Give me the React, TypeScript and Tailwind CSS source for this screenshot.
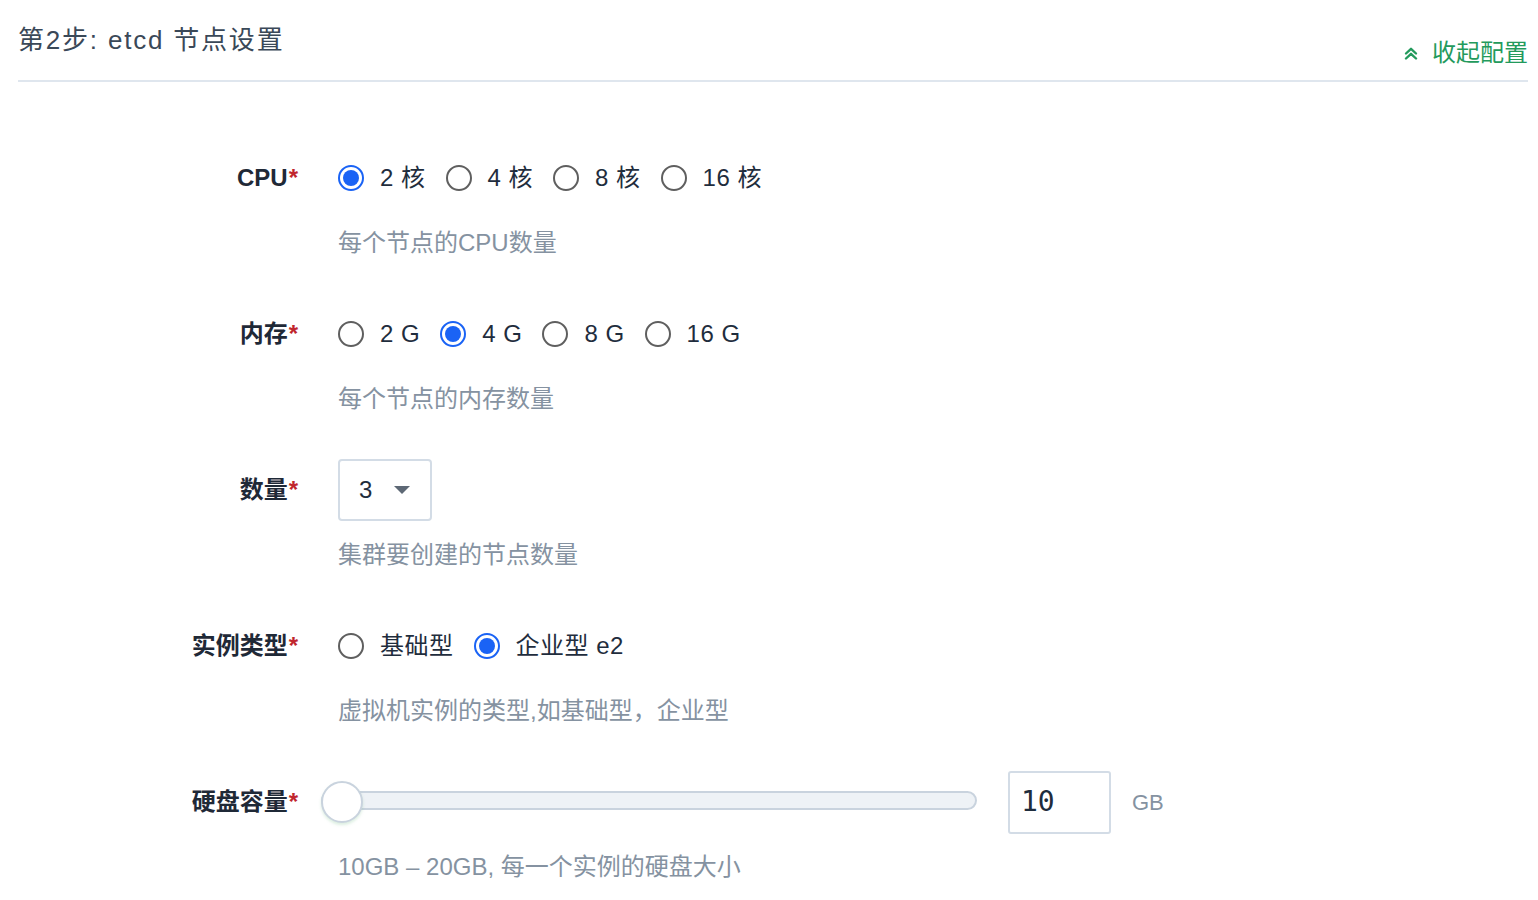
import React from "react";

const font = "font-['Liberation_Sans','Noto_Sans_CJK_SC',sans-serif]";

const Radio = ({checked, label}: {checked: boolean; label: string}) => {
    return (
        <label className="flex items-center mr-[20px] cursor-pointer">
            {checked ? (
                <span className="w-[26px] h-[26px] rounded-full border-2 border-[#1a63f5] flex items-center justify-center">
                    <span className="w-[16px] h-[16px] rounded-full bg-[#1a63f5]" />
                </span>
            ) : (
                <span className="w-[26px] h-[26px] rounded-full border-2 border-[#5f5f5f]" />
            )}
            <span className="ml-[16px] text-[24px] tracking-[0.5px] text-[#1f2d3d]">{label}</span>
        </label>
    );
};

const Field = ({label, hint, children}: {label: string; hint: string; children: React.ReactNode}) => {
    return (
        <div className="flex mb-[42px]">
            <div className="w-[280px] h-[62px] flex items-center justify-end text-[24px] font-semibold text-[#1f2937]">
                {label}
                <span className="text-[#c0262d] ml-[1px]">*</span>
            </div>
            <div className="ml-[40px] flex flex-col">
                <div className="h-[62px] flex items-center">{children}</div>
                <div className="mt-[16px] leading-[36px] text-[24px] text-[#8592a1]">{hint}</div>
            </div>
        </div>
    );
};

const App = () => {
    return (
        <div className={`${font} w-[1538px] h-[900px] bg-white pl-[18px] pr-[10px] overflow-hidden`}>
            <div className="flex justify-between items-start border-b-2 border-[#dfe6ee] pb-[9px]">
                <h1 className="pt-[22px] leading-[36px] text-[26px] tracking-[1.8px] text-[#3a4858]">第2步: etcd 节点设置</h1>
                <div className="pt-[35px] leading-[36px] flex items-center gap-[14px] text-[24px] text-[#239a5c] cursor-pointer">
                    <svg width="14" height="13" viewBox="0 0 14 13" fill="none" stroke="currentColor" strokeWidth="2.4" strokeLinecap="round" strokeLinejoin="round">
                        <path d="M2 6.5 L7 1.8 L12 6.5" />
                        <path d="M2 11.5 L7 6.8 L12 11.5" />
                    </svg>
                    <span>收起配置</span>
                </div>
            </div>

            <div className="mt-[65px]">
                <Field label="CPU" hint="每个节点的CPU数量">
                    <Radio checked label="2 核" />
                    <Radio checked={false} label="4 核" />
                    <Radio checked={false} label="8 核" />
                    <Radio checked={false} label="16 核" />
                </Field>

                <Field label="内存" hint="每个节点的内存数量">
                    <Radio checked={false} label="2 G" />
                    <Radio checked label="4 G" />
                    <Radio checked={false} label="8 G" />
                    <Radio checked={false} label="16 G" />
                </Field>

                <Field label="数量" hint="集群要创建的节点数量">
                    <div className="w-[94px] h-[62px] border-2 border-[#d3dce6] rounded-[4px] flex items-center pl-[19px] gap-[22px]">
                        <span className="text-[24px] text-[#1f2d3d]">3</span>
                        <svg width="16" height="8" viewBox="0 0 16 8">
                            <path d="M0 0 L16 0 L8 8 Z" fill="#5d6875" />
                        </svg>
                    </div>
                </Field>

                <Field label="实例类型" hint="虚拟机实例的类型,如基础型，企业型">
                    <Radio checked={false} label="基础型" />
                    <Radio checked label="企业型 e2" />
                </Field>

                <Field label="硬盘容量" hint="10GB – 20GB, 每一个实例的硬盘大小">
                    <div className="ml-[-17px] w-[656px] h-[42px] relative flex items-center">
                        <div className="w-full h-[19px] mt-[-3px] rounded-full border-2 border-[#c9d3de] bg-[#eef2f6]" />
                        <div className="absolute left-0 top-0 w-[42px] h-[42px] rounded-full border-2 border-[#c9d3de] bg-white shadow-[0_2px_3px_rgba(120,190,140,0.25)]" />
                    </div>
                    <div className="ml-[31px] w-[103px] h-[63px] border-2 border-[#d3dce6] rounded-[3px] flex items-center pl-[11px] font-['DejaVu_Sans_Mono',monospace] text-[28px] text-[#1f2d3d]">
                        10
                    </div>
                    <span className="ml-[21px] text-[22px] text-[#8592a1]">GB</span>
                </Field>
            </div>
        </div>
    );
};

export default App;
